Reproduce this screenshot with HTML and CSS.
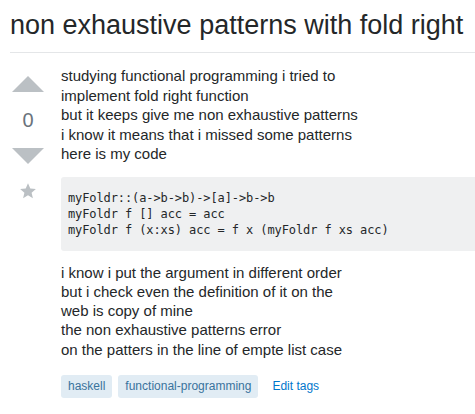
FILE: index.html
```html
<!DOCTYPE html>
<html>
<head>
<meta charset="utf-8">
<link rel="stylesheet" href="styles.css">
</head>
<body>
<div class="page">
  <h1 class="title">non exhaustive patterns with fold right</h1>
  <div class="post">
    <div class="votes">
      <svg class="arrow up" width="36" height="18" viewBox="0 0 36 18"><path d="M2 16h32L18 0z" fill="#bbc0c4"/></svg>
      <div class="count">0</div>
      <svg class="arrow down" width="36" height="18" viewBox="0 0 36 18"><path d="M2 2h32L18 18z" fill="#bbc0c4"/></svg>
      <svg class="star" width="18" height="18" viewBox="0 0 18 18"><path d="M9 1.2l2.3 5.2 5.6.5-4.3 3.8 1.3 5.5L9 13.3l-4.9 2.9 1.3-5.5L1.1 6.9l5.6-.5z" fill="#bbc0c4"/></svg>
    </div>
    <div class="body">
      <p>studying functional programming i tried to<br>implement fold right function<br>but it keeps give me non exhaustive patterns<br>i know it means that i missed some patterns<br>here is my code</p>
      <pre class="code"><code>myFoldr::(a-&gt;b-&gt;b)-&gt;[a]-&gt;b-&gt;b
myFoldr f [] acc = acc
myFoldr f (x:xs) acc = f x (myFoldr f xs acc)</code></pre>
      <p class="p2">i know i put the argument in different order<br>but i check even the definition of it on the<br>web is copy of mine<br>the non exhaustive patterns error<br>on the patters in the line of empte list case</p>
      <div class="tags">
        <span class="tag">haskell</span>
        <span class="tag">functional-programming</span>
        <a class="edit">Edit tags</a>
      </div>
    </div>
  </div>
</div>
</body>
</html>
```
FILE: styles.css
```css
html, body {
  margin: 0;
  padding: 0;
  background: #fff;
}
body {
  font-family: "Liberation Sans", Arial, sans-serif;
  color: #242729;
  overflow: hidden;
}
.page {
  padding-left: 10px;
  width: 480px;
}
.title {
  font-weight: normal;
  font-size: 27px;
  line-height: 35px;
  margin: 0;
  padding: 8px 0 9px 0;
  border-bottom: 1px solid #e4e6e8;
  white-space: nowrap;
}
.post {
  display: flex;
  padding-top: 13px;
}
.votes {
  width: 36px;
  margin-right: 15px;
  display: flex;
  flex-direction: column;
  align-items: center;
  flex-shrink: 0;
}
.arrow {
  display: block;
}
.up {
  margin-top: 10px;
}
.count {
  font-size: 20px;
  line-height: 24px;
  color: #6a737c;
  margin: 14px 0 14px;
}
.star {
  margin-top: 18px;
  display: block;
}
.body {
  flex: 1;
  font-size: 15px;
  line-height: 19.5px;
}
.body p {
  margin: 0 0 13px;
}
.body .p2 {
  line-height: 19.25px;
  margin-bottom: 0;
}
.code {
  margin: 0 0 12px;
  background: #eff0f1;
  border-radius: 3px;
  padding: 13px 7px 13px 7px;
  font-family: "DejaVu Sans Mono", monospace;
  font-size: 12px;
  letter-spacing: -0.1px;
  line-height: 16px;
  color: #242729;
}
.tags {
  display: flex;
  align-items: center;
  margin-top: 16px;
}
.tag {
  background: #e1ecf4;
  color: #39739d;
  font-size: 12px;
  line-height: 15px;
  padding: 4px 7px;
  border-radius: 3px;
  margin-right: 6px;
}
.edit {
  color: #0077cc;
  font-size: 12px;
  margin-left: 8px;
}
```
